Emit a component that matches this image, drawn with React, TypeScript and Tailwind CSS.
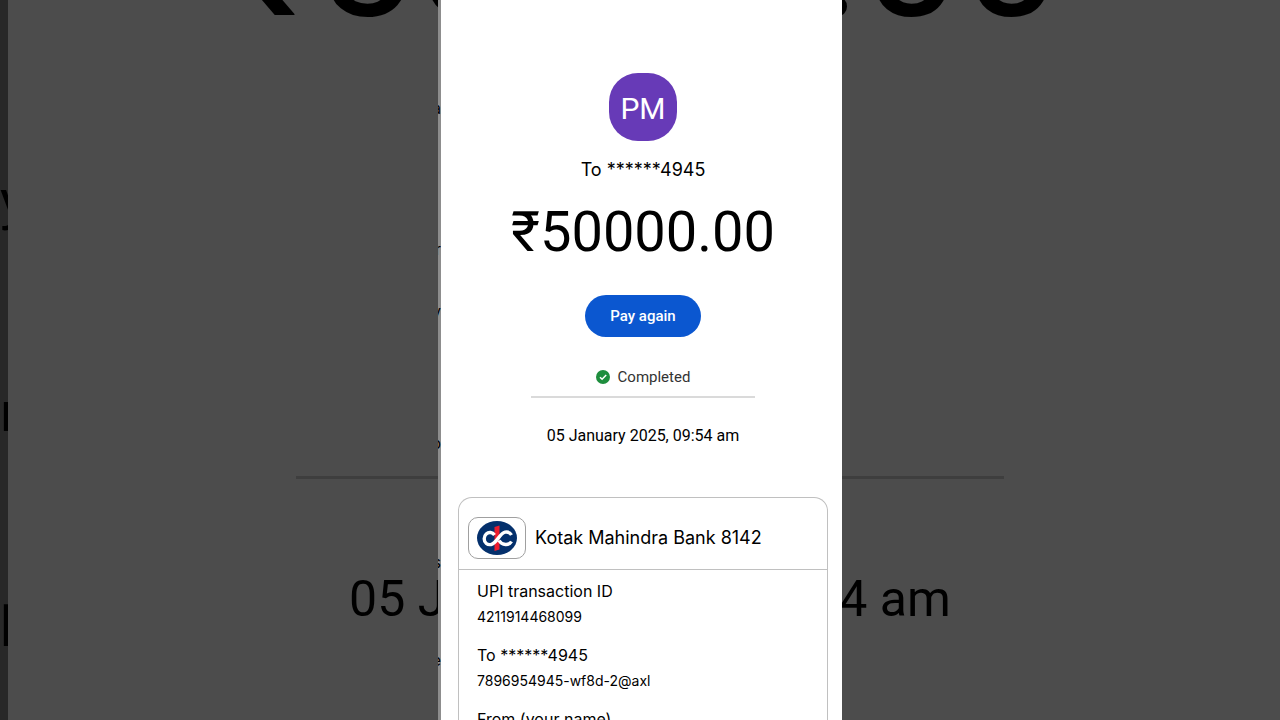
import React from "react";

const details = [
  { label: "UPI transaction ID", value: "4211914468099" },
  { label: "To ******4945", value: "7896954945-wf8d-2@axl" },
  { label: "From (your name)", value: "" },
];

function CheckIcon() {
  return (
    <svg viewBox="0 0 14 14" className="size-[14px]" aria-hidden="true">
      <circle cx="7" cy="7" r="7" fill="#1e8e3e" />
      <path d="M4 7.2l2.1 2.1L10.2 5" fill="none" stroke="#fff" strokeWidth="1.5" />
    </svg>
  );
}

function BankLogo() {
  return (
    <svg viewBox="0 0 40 34" className="w-10 h-[34px]" aria-hidden="true">
      <ellipse cx="20" cy="17" rx="20" ry="17" fill="#04306c" />
      <path d="M17.5 6l5-1.5v24l-5 1.5z" fill="#ed1c2e" />
      <g fill="none" stroke="#fff" strokeWidth="3.4">
        <path d="M34.5 14C33 11.500 30.500 10.600 28 11.200C22.500 12.500 20 22 14 23.500C10.500 24.200 7.200 22 7.200 17.800C7.200 13.500 10.500 11.200 13.500 11.500C15.200 11.700 16.500 12.500 17.500 14" />
        <path d="M22 19.500C23.500 22 25.500 23.300 28.500 23.500C31 23.700 33.300 22.500 34.500 20.500" />
      </g>
    </svg>
  );
}

// Enlarged, darkened copy of the receipt behind the phone column
function Backdrop() {
  return (
    <div
      className="absolute inset-0 flex overflow-hidden bg-[#4c4c4c] font-[Roboto,sans-serif] text-black"
      aria-hidden="true"
    >
      <div className="flex w-2 shrink-0 flex-col items-start overflow-hidden bg-[#282828] pt-[170px] text-[56px] leading-[60px]">
        <span>y</span>
        <span className="mt-[152px]">r</span>
        <span className="mt-[155px]">b</span>
      </div>
      <div className="flex min-w-0 flex-1 flex-col items-center pl-3">
        <div className="-mt-[150px] mr-4 shrink-0 text-[178px] leading-[208px] whitespace-nowrap">₹50000.00</div>
        <div className="mt-[418px] h-[3px] w-[708px] shrink-0 bg-[#3e3e3e]" />
        <div className="mt-[90px] shrink-0 text-[50px] leading-[60px] whitespace-nowrap">
          05 January 2025, 09:54 am
        </div>
      </div>
    </div>
  );
}

// Thin slice of the neighbouring page at the left edge of the column
function EdgeStrip() {
  return (
    <div
      className="flex w-[3px] shrink-0 flex-col items-end overflow-hidden bg-[#8d8d8d] pt-[101px] text-[15px] leading-4"
      aria-hidden="true"
    >
      <span>a</span>
      <span className="mt-[125px]">r</span>
      <span className="mt-[46px]">y</span>
      <span className="mt-[116px]">b</span>
      <span className="mt-[103px]">s</span>
      <span className="mt-[82px]">e</span>
    </div>
  );
}

function App() {
  return (
    <main className="relative flex h-screen justify-center overflow-hidden bg-[#4c4c4c] font-[Inter,sans-serif] text-black">
      <Backdrop />

      <div className="relative flex w-full max-w-[404px]">
        <EdgeStrip />

        <section className="min-w-0 flex-1 bg-white pt-[73px] pr-[14px] pl-[17px] text-center">
          <div className="mx-auto flex size-[68px] items-center justify-center rounded-[29px] bg-[#673ab7] pt-0.5 font-[Roboto,sans-serif] text-[30px] text-white">
            PM
          </div>

          <p className="mt-[17px] text-lg leading-6">To ******4945</p>
          <h1 className="mt-4 font-[Roboto,sans-serif] text-[56px] leading-[68px]">₹50000.00</h1>

          <button
            type="button"
            className="mt-[29px] block mx-auto h-[42px] w-[116px] rounded-full bg-[#0b57d0] font-[Roboto,sans-serif] text-[15px] font-medium text-white"
          >
            Pay again
          </button>

          <div className="mt-[29px] flex items-center justify-center gap-2 font-[Roboto,sans-serif] text-[15px] leading-[22px] text-[#333]">
            <CheckIcon />
            Completed
          </div>
          <hr className="mx-auto mt-2 w-56 border-t-2 border-[#dadada]" />
          <p className="mt-[26px] font-[Roboto,sans-serif] text-base leading-6">05 January 2025, 09:54 am</p>

          <div className="mt-[49px] rounded-t-[14px] border border-b-0 border-[#c0c0c0] text-left">
            <div className="flex h-[72px] items-center gap-[9px] border-b border-[#c0c0c0] pt-2 pl-[9px]">
              <div className="flex h-[42px] w-[58px] items-center justify-center rounded-[10px] border border-[#a0a0a0]">
                <BankLogo />
              </div>
              <h2 className="text-lg leading-[30px]">Kotak Mahindra Bank 8142</h2>
            </div>

            <dl className="px-[18px] pt-[9px]">
              {details.map((item) => (
                <div key={item.label} className="mb-[15px]">
                  <dt className="text-base leading-6">{item.label}</dt>
                  <dd className="pt-[3px] text-sm leading-[22px]">{item.value}</dd>
                </div>
              ))}
            </dl>
          </div>
        </section>
      </div>
    </main>
  );
}

export default App;
